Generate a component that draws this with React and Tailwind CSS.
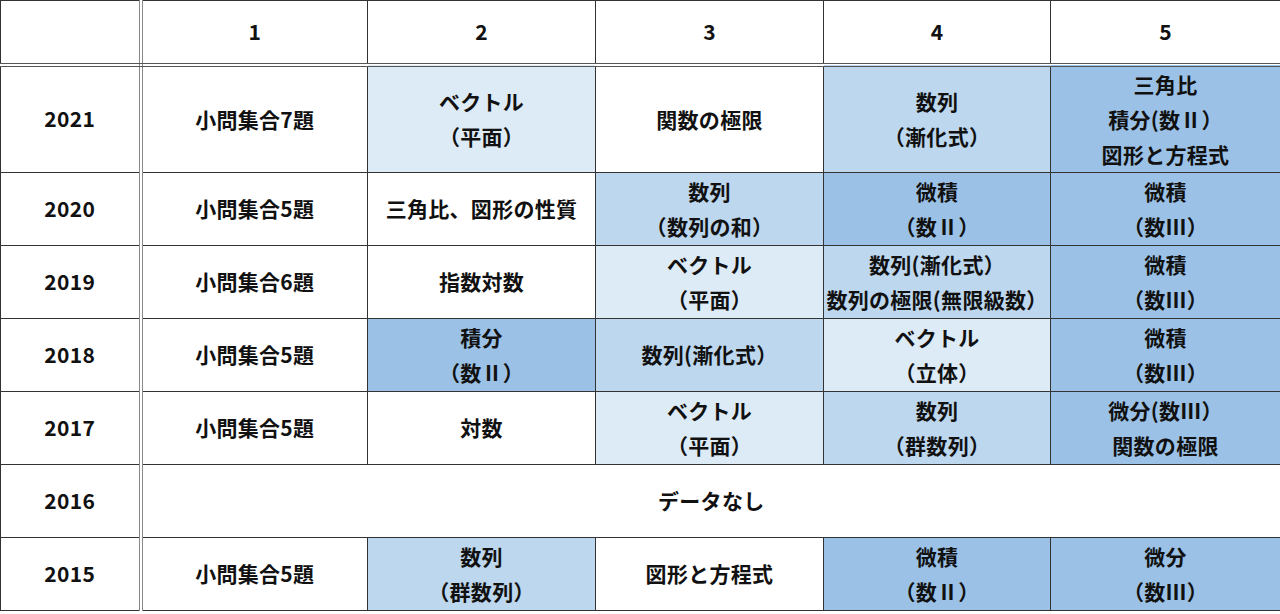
const L = "bg-[#ddebf7]";
const M = "bg-[#bdd7ee]";
const D = "bg-[#9bc2e6]";
const W = "bg-white";

const rows = [
  {
    year: "2021",
    h: "h-[107px]",
    cells: [
      { t: ["小問集合7題"], c: W },
      { t: ["ベクトル", "（平面）"], c: L },
      { t: ["関数の極限"], c: W },
      { t: ["数列", "（漸化式）"], c: M },
      { t: ["三角比", "積分(数Ⅱ）", "図形と方程式"], c: D },
    ],
  },
  {
    year: "2020",
    cells: [
      { t: ["小問集合5題"], c: W },
      { t: ["三角比、図形の性質"], c: W },
      { t: ["数列", "（数列の和）"], c: M },
      { t: ["微積", "（数Ⅱ）"], c: D },
      { t: ["微積", "（数Ⅲ）"], c: D },
    ],
  },
  {
    year: "2019",
    cells: [
      { t: ["小問集合6題"], c: W },
      { t: ["指数対数"], c: W },
      { t: ["ベクトル", "（平面）"], c: L },
      { t: ["数列(漸化式）", "数列の極限(無限級数）"], c: M },
      { t: ["微積", "（数Ⅲ）"], c: D },
    ],
  },
  {
    year: "2018",
    cells: [
      { t: ["小問集合5題"], c: W },
      { t: ["積分", "（数Ⅱ）"], c: D },
      { t: ["数列(漸化式）"], c: M },
      { t: ["ベクトル", "（立体）"], c: L },
      { t: ["微積", "（数Ⅲ）"], c: D },
    ],
  },
  {
    year: "2017",
    cells: [
      { t: ["小問集合5題"], c: W },
      { t: ["対数"], c: W },
      { t: ["ベクトル", "（平面）"], c: L },
      { t: ["数列", "（群数列）"], c: M },
      { t: ["微分(数Ⅲ）", "関数の極限"], c: D },
    ],
  },
  { year: "2016", none: true },
  {
    year: "2015",
    cells: [
      { t: ["小問集合5題"], c: W },
      { t: ["数列", "（群数列）"], c: M },
      { t: ["図形と方程式"], c: W },
      { t: ["微積", "（数Ⅱ）"], c: D },
      { t: ["微分", "（数Ⅲ）"], c: D },
    ],
  },
];

function Cell({ lines, bg }) {
  return (
    <td className={`border border-[#333] ${bg} p-0 text-center align-middle`}>
      {lines.map((l, i) => (
        <div key={i} className="leading-[35px]">
          {l}
        </div>
      ))}
    </td>
  );
}

export default function App() {
  return (
    <div className="h-[614px] w-[1280px] overflow-hidden bg-white">
      <table
        className="w-[1280px] table-fixed border-collapse text-[21px] font-bold tracking-[0.3px] text-[#111]"
        style={{ fontFamily: '"Noto Sans CJK JP", "Noto Sans", sans-serif' }}
      >
        <colgroup>
          <col className="w-[140px]" />
          <col className="w-[227px]" />
          <col className="w-[228px]" />
          <col className="w-[228px]" />
          <col className="w-[227px]" />
          <col className="w-[230px]" />
        </colgroup>
        <thead>
          <tr className="h-[64px]">
            <th className="border border-b-4 border-r-4 border-[#333] border-b-[#555] border-r-[#888] border-double"></th>
            {["1", "2", "3", "4", "5"].map((n) => (
              <th
                key={n}
                className="border border-b-4 border-[#333] border-b-[#555] border-double text-center align-middle font-bold"
              >
                {n}
              </th>
            ))}
          </tr>
        </thead>
        <tbody>
          {rows.map((r) => (
            <tr key={r.year} className={r.h || "h-[73px]"}>
              <td className="border border-r-4 border-[#333] border-r-[#888] border-double text-center align-middle">
                {r.year}
              </td>
              {r.none ? (
                <td
                  colSpan={5}
                  className="border border-[#333] bg-white text-center align-middle"
                >
                  データなし
                </td>
              ) : (
                r.cells.map((c, i) => <Cell key={i} lines={c.t} bg={c.c} />)
              )}
            </tr>
          ))}
        </tbody>
      </table>
    </div>
  );
}
